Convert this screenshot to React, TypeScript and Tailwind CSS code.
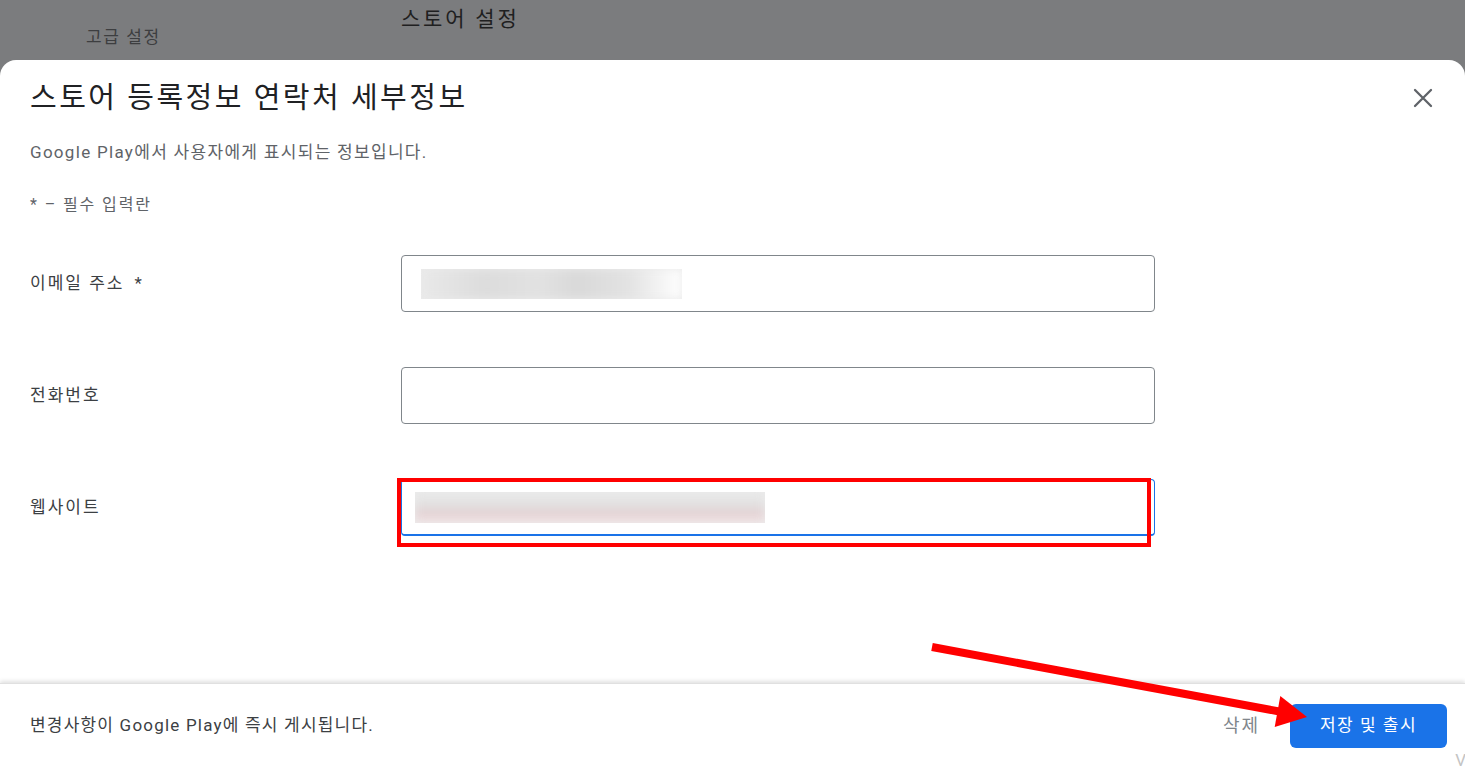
import React from 'react';

const font = "font-['Roboto','Noto_Sans_CJK_KR',sans-serif]";

const Field = ({ label, required, children, focused }: { label: string; required?: boolean; children?: React.ReactNode; focused?: boolean }) => (
  <>
    <div className="flex items-center text-[17px] tracking-[2px] text-[#3c4043]">
      {label}
      {required && <span className="ml-[10px]">*</span>}
    </div>
    <div
      className={
        focused
          ? 'h-[57px] rounded-[4px] border border-b-2 border-[#1a73e8] flex items-center pl-[13px]'
          : 'h-[57px] rounded-[4px] border border-[#80868b] flex items-center pl-[19px]'
      }
    >
      {children}
    </div>
  </>
);

const App = () => {
  return (
    <div className={`relative w-[1465px] h-[767px] overflow-hidden bg-[#7b7c7e] flex flex-col ${font}`}>
      {/* dimmed page behind the dialog */}
      <div className="h-[60px] shrink-0 grid grid-cols-[401px_1fr]">
        <div className="pl-[86px] pt-[25px] text-[17px] tracking-[1.6px] text-[#3d3e40]">고급 설정</div>
        <div className="pt-[4px] text-[21px] tracking-[2.8px] text-[#1f2021]">스토어 설정</div>
      </div>

      <div className="flex-1 bg-white rounded-t-[16px] flex flex-col">
        <div className="px-[30px] flex-1">
          <div className="flex items-center justify-between pt-[20px]">
            <h1 className="text-[29px] leading-[36px] tracking-[2.5px] text-[#202124]">스토어 등록정보 연락처 세부정보</h1>
            <svg width="20" height="20" viewBox="0 0 20 20" className="mr-[2px]">
              <path d="M2 2 L18 18 M18 2 L2 18" stroke="#5f6368" strokeWidth="2.3" strokeLinecap="round" />
            </svg>
          </div>
          <p className="mt-[24px] text-[17px] leading-[24px] tracking-[1.3px] text-[#5f6368]">Google Play에서 사용자에게 표시되는 정보입니다.</p>
          <p className="mt-[29px] text-[16px] leading-[24px] tracking-[1.9px] text-[#5f6368]">* – 필수 입력란</p>

          <div className="mt-[38px] grid grid-cols-[371px_754px] gap-y-[55px]">
            <Field label="이메일 주소" required>
              <div className="w-[261px] h-[30px] overflow-hidden bg-[#ebebeb]">
                <div className="w-full h-full blur-[4px] bg-[linear-gradient(90deg,#e9e9e9,#dcdcdc_25%,#e2e2e2_45%,#d9d9d9_60%,#e3e3e3_80%,#ffffff)]" />
              </div>
            </Field>
            <Field label="전화번호" />
            <Field label="웹사이트" focused>
              <div className="w-[350px] h-[31px] overflow-hidden bg-[#ececec]">
                <div className="w-full h-full blur-[5px] bg-[linear-gradient(180deg,#e9e9e9,#e2e2e2_40%,#e2cfd1_70%,#efdcde_90%,#f6f0f0)]" />
              </div>
            </Field>
          </div>
        </div>

        <div className="h-[84px] shrink-0 border-t border-[#e0e0e0] shadow-[0_-2px_4px_rgba(0,0,0,0.12)] flex items-center pl-[30px] pr-[18px]">
          <span className="text-[17px] tracking-[1.2px] text-[#3c4043]">변경사항이 Google Play에 즉시 게시됩니다.</span>
          <span className="ml-auto text-[18px] tracking-[2px] text-[#80868b]">삭제</span>
          <button className="ml-[30px] w-[157px] h-[44px] rounded-[6px] bg-[#1a73e8] text-white text-[17px] tracking-[1.5px]">저장 및 출시</button>
        </div>
      </div>

      <span className="absolute right-[-1px] bottom-[-3px] text-[17px] leading-[20px] text-[#c4c4c4]">V</span>

      {/* annotations */}
      <div className="absolute left-[397px] top-[478px] w-[754px] h-[69px] border-4 border-[#ff0000]" />
      <svg className="absolute inset-0 pointer-events-none" width="1465" height="767" viewBox="0 0 1465 767">
        <line x1="932" y1="647" x2="1282" y2="712" stroke="#ff0000" strokeWidth="8" />
        <polygon points="1307,717 1274.7,727 1280.3,696" fill="#ff0000" />
      </svg>
    </div>
  );
};

export default App;
